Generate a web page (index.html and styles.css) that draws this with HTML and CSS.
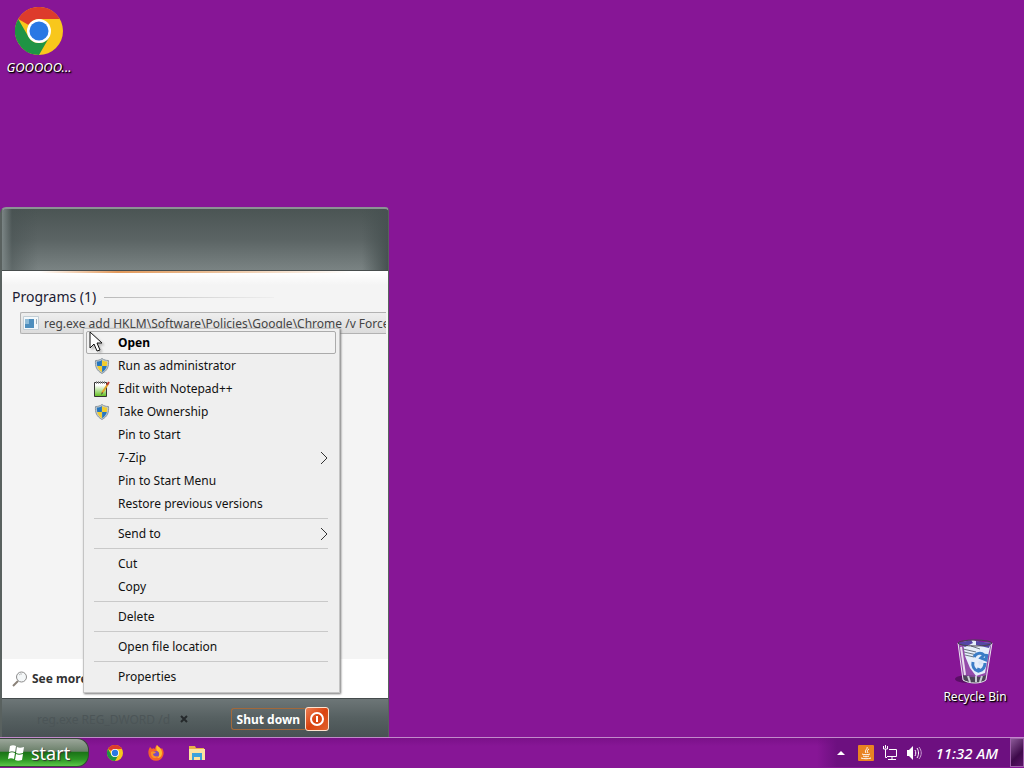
FILE: index.html
```
<!DOCTYPE html>
<html lang="en">
  <head>
    <meta charset="UTF-8" />
    <meta name="viewport" content="width=device-width, initial-scale=1.0" />
    <title>Desktop</title>
    <link rel="stylesheet" href="styles.css">
  </head>
  <body>
    <!-- Shared icons -->
    <svg class="sprite" aria-hidden="true">
      <symbol id="chrome" viewBox="0 0 48 48">
        <circle cx="24" cy="24" r="24" fill="#f8c71c" />
        <path d="M3.200 12A24 24 0 0 1 44.800 12H24A12 12 0 0 0 13.600 18z" fill="#dd3b2c" />
        <path d="M3.200 12A24 24 0 0 0 24 48L34.400 30A12 12 0 0 1 13.600 30z" fill="#1f9444" />
        <circle cx="24" cy="24" r="12" fill="#fff" />
        <circle cx="24" cy="24" r="9.500" fill="#2a78e4" />
      </symbol>
      <symbol id="shield" viewBox="0 0 16 16">
        <path d="M8 .5C6 2 4 2.500 1.500 2.500c-.5 6 1 10 6.500 13 5.500-3 7-7 6.500-13C12 2.500 10 2 8 .5z" fill="#c3cbd0" stroke="#8b979e" />
        <path d="M7.900 2C6.300 3 4.800 3.500 2.800 3.600c0 1.700.1 3 .4 4.400h4.700z" fill="#2676bd" />
        <path d="M8.100 2c1.600 1 3.100 1.500 5.100 1.600 0 1.700-.1 3-.4 4.400H8.100z" fill="#f2cd2c" />
        <path d="M3.200 8h4.700v6.200C5.400 12.700 3.900 10.700 3.200 8z" fill="#f2cd2c" />
        <path d="M12.800 8H8.100v6.200c2.500-1.500 4-3.500 4.700-6.200z" fill="#2676bd" />
      </symbol>
      <symbol id="arrow" viewBox="0 0 8 14">
        <path d="M1 1l6 6-6 6" fill="none" stroke="#333" />
      </symbol>
      <linearGradient id="page" x1="0" y1="0" x2="0" y2="1">
        <stop offset="0.200" stop-color="#fff" />
        <stop offset="1" stop-color="#5fbe1c" />
      </linearGradient>
    </svg>

    <main class="desktop">
      <a href="#" class="shortcut shortcut-chrome">
        <svg width="48" height="48"><use href="#chrome" /></svg>
        <span>GOOOOO...</span>
      </a>

      <a href="#" class="shortcut shortcut-bin">
        <svg width="48" height="48" viewBox="0 0 48 48">
          <ellipse cx="17" cy="42" rx="13" ry="4" fill="#3d0a46" opacity=".6" />
          <path d="M7 6l5 37c6 4 18 4 23 0l6-37z" fill="#a58bc4" opacity=".45" />
          <path d="M12 5l10-2 6 2 12 1-3 13-3 17-9 3-6-8-5-12z" fill="#e6eefb" />
          <path d="M7 6l13-3 2 3-8 4z" fill="#5546a6" />
          <path d="M25 4l15 2-2 5-13-3z" fill="#5546a6" />
          <path d="M12 12l13 3M13 15l13 3M14 18l9 2M20 9l9 3" stroke="#6c7480" fill="none" />
          <path d="M23 20c2-4 7-5 10-2l-3 3 5 2 1-6M22 25c-1 4 1 8 5 9l1-3M34 26c0 4-2 7-6 8" fill="none" stroke="#3b7cc6" stroke-width="3" />
          <path d="M27 25l4-2 1 4-4 1z" fill="#d7e5f8" />
          <path d="M12 38c6 3 17 3 23 0l-1 6c-5 3-16 3-21 0z" fill="#4b4556" />
          <path d="M17 39l2 6M25 39v6M31 39l-2 6" stroke="#c9ccd4" stroke-width="2" />
          <path d="M7 6l5 37c6 4 18 4 23 0l6-37" fill="none" stroke="#e8e4ee" />
          <ellipse cx="24" cy="6" rx="17" ry="3" fill="none" stroke="#49434f" />
          <path d="M10 10l4 28" stroke="#fff" stroke-width="2" opacity=".8" />
        </svg>
        <span>Recycle Bin</span>
      </a>

      <section class="start-menu">
        <header class="start-header"></header>
        <div class="results">
          <h2>Programs (1)</h2>
          <button type="button" class="result">
            <svg width="16" height="16" viewBox="0 0 16 16">
              <path d="M.5 1.500h15v13H.5z" fill="#f3f8fb" stroke="#c3ced5" />
              <path d="M2 4h9v9H2z" fill="#4d8ebe" />
              <path d="M2 4h4v5H2z" fill="#8ebbd8" />
              <path d="M13.500 4v5" stroke="#9fb0ba" />
            </svg>
            <span>reg.exe add HKLM\Software\Policies\Google\Chrome /v Force</span>
          </button>
        </div>
        <a href="#" class="see-more">
          <svg width="16" height="16" viewBox="0 0 16 16">
            <circle cx="9.500" cy="6" r="5" fill="#f4f7f8" stroke="#8b8b8b" />
            <path d="M7 4a3 3 0 0 1 3-1" stroke="#bbb" fill="none" />
            <path d="M6 10l-5 5" stroke="#8a8178" stroke-width="2" />
          </svg>
          See more
        </a>
        <footer class="start-footer">
          <div class="search">
            <input type="text" aria-label="Search programs and files" value="reg.exe REG_DWORD /d" />
            <button type="button" class="clear" aria-label="Clear">
              <svg width="8" height="8" viewBox="0 0 8 8"><path d="M1 1l6 6M7 1L1 7" stroke="#25292b" stroke-width="2" /></svg>
            </button>
          </div>
          <div class="power">
            <button type="button" class="shutdown">Shut down</button>
            <button type="button" class="power-button" aria-label="Power">
              <svg width="16" height="16" viewBox="0 0 16 16">
                <circle cx="8" cy="8" r="6" fill="none" stroke="#fff" stroke-width="2" />
                <path d="M8 5v6" stroke="#fff" stroke-width="2" />
              </svg>
            </button>
          </div>
        </footer>
      </section>

      <!-- Right click menu -->
      <div class="context-menu">
        <button type="button" class="item selected">Open</button>
        <button type="button" class="item"><svg class="icon"><use href="#shield" /></svg>Run as administrator</button>
        <button type="button" class="item">
          <svg class="icon" viewBox="0 0 16 16">
            <path d="M.5 1.500h12v14H.5z" fill="url(#page)" stroke="#333" />
            <path d="M2.500 0v3M4.500 0v3M6.500 0v3M8.500 0v3M10.500 0v3" stroke="#999" />
            <path d="M14 3L8 12" stroke="#e0a52c" stroke-width="2" />
            <path d="M15 1l-2 3" stroke="#c03a30" stroke-width="2" />
            <path d="M8 11l-1 3 2-2z" fill="#333" />
          </svg>Edit with Notepad++
        </button>
        <button type="button" class="item"><svg class="icon"><use href="#shield" /></svg>Take Ownership</button>
        <button type="button" class="item">Pin to Start</button>
        <button type="button" class="item">7-Zip<svg class="more"><use href="#arrow" /></svg></button>
        <button type="button" class="item">Pin to Start Menu</button>
        <button type="button" class="item">Restore previous versions</button>
        <hr />
        <button type="button" class="item">Send to<svg class="more"><use href="#arrow" /></svg></button>
        <hr />
        <button type="button" class="item">Cut</button>
        <button type="button" class="item">Copy</button>
        <hr />
        <button type="button" class="item">Delete</button>
        <hr />
        <button type="button" class="item">Open file location</button>
        <hr />
        <button type="button" class="item">Properties</button>
      </div>

      <svg class="cursor" width="14" height="22" viewBox="0 0 14 22">
        <path d="M1 1v16l4-4 3 7 3-1-3-7h5z" fill="#fff" stroke="#111" />
      </svg>
    </main>

    <nav class="taskbar">
      <button type="button" class="start">
        <svg width="18" height="18" viewBox="0 0 18 18" fill="#fff">
          <path d="M3 2c2-1 4-1 6 0L8 8c-2-1-4-1-6 0z" />
          <path d="M10 3c2 1 4 1 7 0l-1 6c-3 1-5 1-7 0z" />
          <path d="M2 9c2-1 4-1 6 0l-1 6c-2-1-4-1-6 0z" />
          <path d="M9 10c2 1 4 1 7 0l-1 6c-3 1-5 1-7 0z" />
        </svg>
        start
      </button>
      <div class="pinned">
        <button type="button" aria-label="Chrome"><svg width="16" height="16"><use href="#chrome" /></svg></button>
        <button type="button" aria-label="Firefox">
          <svg width="16" height="16" viewBox="0 0 16 16">
            <path d="M2 2l2 2c1-1 2-1 3 0 0-2 1-3 2-4 1 2 3 2 4 4l1-1c2 3 2 6 1 8a7.500 7.500 0 0 1-14 0C0 8 0 5 2 2z" fill="#f5632c" />
            <path d="M9 0c1 2 5 3 5 8 0 3-2 5-5 5 3-2 3-5 0-7C8 4 8 2 9 0z" fill="#fdbd2e" />
            <circle cx="8" cy="9" r="3" fill="#7a4ac4" />
            <path d="M3 7c2-1 3 0 5 0-1 2-2 1-3 2 0 2 3 3 5 2-2 4-8 2-7-4z" fill="#fb9226" />
          </svg>
        </button>
        <button type="button" aria-label="File Explorer">
          <svg width="16" height="16" viewBox="0 0 16 16">
            <path d="M0 1h6l1 2h8v3H0z" fill="#e8b04a" />
            <path d="M0 4h16v11H0z" fill="#fbe3a0" />
            <path d="M3 8h10v7h-2v-3H5v3H3z" fill="#3ba3dc" />
          </svg>
        </button>
      </div>
      <div class="tray">
        <button type="button" aria-label="Show hidden icons">
          <svg width="8" height="4" viewBox="0 0 8 4"><path d="M0 4l4-4 4 4z" fill="#fff" /></svg>
        </button>
        <button type="button" aria-label="Java">
          <svg width="16" height="16" viewBox="0 0 16 16">
            <rect width="16" height="16" rx="1" fill="#e98322" />
            <path d="M9 2c1 2-3 3-1 6M11 4c-2 1-2 2-1 4M4 9c2 1 6 1 8 0M5 11c2 1 4 1 6 0M3 13c3 1 7 1 10 0" fill="none" stroke="#fff" />
          </svg>
        </button>
        <button type="button" aria-label="Network">
          <svg width="16" height="16" viewBox="0 0 16 16" fill="none" stroke="#fff">
            <path d="M7 4.500h7.500v7H5M10 12v2M6 14.500h8M1.500 1v3h4V1M3.500 0v3M3.500 4v8.500H5" />
          </svg>
        </button>
        <button type="button" aria-label="Volume">
          <svg width="16" height="16" viewBox="0 0 16 16">
            <path d="M1 5h2l4-4v14l-4-4H1z" fill="#fff" />
            <path d="M9 5c1 2 1 4 0 6M11 3c2 3 2 7 0 10" fill="none" stroke="#fff" />
            <path d="M13 2c3 4 3 8 0 12" fill="none" stroke="#c79bd0" />
          </svg>
        </button>
        <time>11:32 AM</time>
        <button type="button" class="show-desktop" aria-label="Show desktop"></button>
      </div>
    </nav>
  </body>
</html>
```
FILE: styles.css
```
* {
  box-sizing: border-box;
}

html,
body {
  height: 100%;
  margin: 0;
}

body {
  display: flex;
  flex-direction: column;
  overflow: hidden;
  background-color: #871696;
  font-family: "Noto Sans", sans-serif;
  font-size: 12px;
  color: #111;
}

button {
  margin: 0;
  padding: 0;
  border: none;
  background: none;
  font: inherit;
  color: inherit;
}

svg {
  display: block;
  flex: none;
}

.sprite {
  position: absolute;
  width: 0;
  height: 0;
}

.desktop {
  position: relative;
  flex: 1;
}

/* Desktop shortcuts */
.shortcut {
  position: absolute;
  display: flex;
  flex-direction: column;
  align-items: center;
  gap: 4px;
  width: 76px;
  line-height: 16px;
  color: #fff;
  text-decoration: none;
  text-shadow: 1px 1px 2px #000, 1px 1px 1px #000;
}

.shortcut-chrome {
  left: 1px;
  top: 7px;
  font-size: 13px;
  font-style: italic;
}

.shortcut-bin {
  right: 11px;
  bottom: 32px;
}

/* Start menu */
.start-menu {
  position: absolute;
  left: 0;
  bottom: 0;
  display: flex;
  flex-direction: column;
  width: 389px;
  height: 530px;
  border: 1px solid #59615f;
  border-left-width: 2px;
  border-top: 2px solid #8b9394;
  border-bottom: none;
  border-radius: 6px 4px 0 0;
  background-color: #fff;
  overflow: hidden;
}

.start-header {
  height: 62px;
  border-bottom: 1px solid #474d4d;
  background:
    linear-gradient(90deg, #7b8585, #47515180 10px, transparent 36px, transparent 360px, #475151),
    linear-gradient(#4b5554, #5b6464 50%, #7a8383);
}

.results {
  flex: 1;
  padding: 14px 0 0 10px;
  border-top: 2px solid transparent;
  border-image: linear-gradient(90deg, #fff 10%, #e29a5c 30%, #e8b88c 50%, #fff 90%) 1;
  background: linear-gradient(#fff, #f4f4f4 12px);
}

h2 {
  display: flex;
  align-items: center;
  gap: 8px;
  margin: 0 0 5px;
  font-size: 14px;
  font-weight: 400;
  line-height: 20px;
  color: #1b1b33;
}

h2::after {
  content: "";
  width: 170px;
  height: 1px;
  background: linear-gradient(90deg, #b9b9b9, #eee);
}

.result {
  display: flex;
  align-items: center;
  gap: 5px;
  width: 366px;
  height: 22px;
  margin-left: 8px;
  padding-left: 2px;
  border: 1px solid #b2b2b2;
  border-right: none;
  border-radius: 2px 0 0 2px;
  background: linear-gradient(#eee, #dcdcdc);
  color: #444;
  white-space: nowrap;
  overflow: hidden;
}

.see-more {
  display: flex;
  align-items: center;
  gap: 4px;
  height: 39px;
  padding-left: 10px;
  color: #333;
  font-weight: 700;
  text-decoration: none;
}

.start-footer {
  display: flex;
  align-items: center;
  justify-content: space-between;
  height: 39px;
  padding: 2px 59px 0 35px;
  border-top: 1px solid #444b4c;
  background: linear-gradient(#6d7677, #566061 50%, #485153);
}

.search {
  display: flex;
  align-items: center;
  width: 151px;
}

.search input {
  flex: 1;
  min-width: 0;
  padding: 0;
  border: none;
  outline: none;
  background: none;
  font: inherit;
  color: #4c5557;
}

.power {
  display: flex;
  align-items: center;
}

.shutdown {
  height: 22px;
  padding: 0 5px;
  border: 1px solid #a3683a;
  border-right: none;
  border-radius: 3px 0 0 3px;
  color: #fff;
  font-weight: 700;
}

.power-button {
  display: grid;
  place-items: center;
  width: 24px;
  height: 24px;
  border: 1px solid #ffe3cf;
  border-radius: 3px;
  background: linear-gradient(135deg, #ee8055, #d9430f 50%, #e0622c);
}

/* Context menu */
.context-menu {
  position: absolute;
  left: 83px;
  bottom: 44px;
  width: 257px;
  padding: 2px 3px 4px 2px;
  border: 1px solid #c4c4c4;
  background-color: #efefef;
  box-shadow: 1px 1px 2px #777;
}

.item {
  position: relative;
  display: flex;
  align-items: center;
  width: 100%;
  height: 23px;
  padding-left: 32px;
  line-height: 16px;
}

.selected {
  border: 1px solid #ababab;
  border-radius: 2px;
  padding-left: 31px;
  background-color: #f2f2f2;
  color: #000;
  font-weight: 700;
}

.icon {
  width: 16px;
  height: 16px;
  margin-left: -24px;
  margin-right: 8px;
}

.more {
  width: 8px;
  height: 14px;
  margin-left: auto;
  margin-right: 8px;
}

hr {
  height: 1px;
  margin: 3px 8px;
  border: none;
  background-color: #c9c9c9;
}

.cursor {
  position: absolute;
  left: 89px;
  top: 331px;
  filter: drop-shadow(2px 2px 1px #9999);
}

/* Taskbar */
.taskbar {
  display: flex;
  height: 31px;
  padding-bottom: 1px;
  border-top: 1px solid #c28acb;
  background: linear-gradient(#7b1189, #871696 8px);
}

.start {
  display: flex;
  align-items: center;
  gap: 6px;
  width: 89px;
  padding-left: 7px;
  border: 1px solid #37453a;
  border-left: none;
  border-radius: 0 12px 12px 0;
  background: linear-gradient(#9ba69a, #6b806a 45%, #1b7417 50%, #2c9424 75%, #5bc747);
  color: #fff;
  font-size: 18px;
  line-height: 24px;
  text-shadow: 1px 1px 1px #333;
}

.pinned {
  display: flex;
  align-items: center;
  gap: 25px;
  margin-left: 18px;
}

.tray {
  display: flex;
  align-items: center;
  gap: 8px;
  margin-left: auto;
  padding-left: 20px;
  background: linear-gradient(90deg, transparent, #6d1080 20px);
}

.tray button:first-child {
  margin-right: 5px;
}

time {
  margin-left: 6px;
  color: #fff;
  font-size: 15px;
  font-style: italic;
  font-weight: 500;
}

.show-desktop {
  align-self: stretch;
  width: 14px;
  margin-left: 4px;
  border: 1px solid #a060ac;
  background: linear-gradient(135deg, #8c5a98, #3e0a4a 60%, #5a1468);
}
```
